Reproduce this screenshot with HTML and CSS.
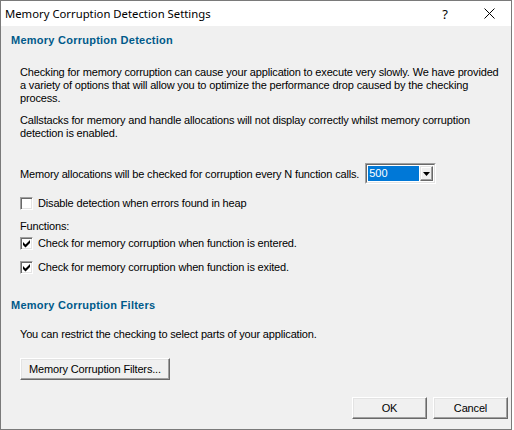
FILE: index.html
```html
<!DOCTYPE html>
<html>
<head>
<meta charset="utf-8">
<link rel="stylesheet" href="styles.css">
</head>
<body>
<div class="window">
  <div class="titlebar">
    <span class="title">Memory Corruption Detection Settings</span>
    <div class="controls">
      <span class="help">?</span>
      <svg class="close" width="11" height="11" viewBox="0 0 11 11"><path d="M0.5 0.5 L10.5 10.5 M10.5 0.5 L0.5 10.5" stroke="#000" stroke-width="1" fill="none"/></svg>
    </div>
  </div>
  <div class="content">
    <h2 class="heading h1">Memory Corruption Detection</h2>
    <p class="text p1">Checking for memory corruption can cause your application to execute very slowly. We have provided a variety of options that will allow you to optimize the performance drop caused by the checking process.</p>
    <p class="text p2">Callstacks for memory and handle allocations will not display correctly whilst memory corruption detection is enabled.</p>
    <div class="alloc-row">
      <span class="text alloc-label">Memory allocations will be checked for corruption every N function calls.</span>
      <div class="combo">
        <div class="combo-inner">
          <span class="combo-value">500</span>
          <span class="combo-btn"><svg width="7" height="4" viewBox="0 0 7 4"><path d="M0 0 H7 L3.5 4 Z" fill="#000"/></svg></span>
        </div>
      </div>
    </div>
    <div class="check-row cr1"><span class="cbox"></span><span class="text">Disable detection when errors found in heap</span></div>
    <div class="text functions">Functions:</div>
    <div class="check-row cr2"><span class="cbox"><svg width="9" height="9" viewBox="0 0 9 9"><path d="M1 3 L3.5 5.5 L8 1 V4 L3.5 8.5 L1 6 Z" fill="#000"/></svg></span><span class="text">Check for memory corruption when function is entered.</span></div>
    <div class="check-row cr3"><span class="cbox"><svg width="9" height="9" viewBox="0 0 9 9"><path d="M1 3 L3.5 5.5 L8 1 V4 L3.5 8.5 L1 6 Z" fill="#000"/></svg></span><span class="text">Check for memory corruption when function is exited.</span></div>
    <h2 class="heading h2">Memory Corruption Filters</h2>
    <p class="text p3">You can restrict the checking to select parts of your application.</p>
    <button class="btn filters-btn">Memory Corruption Filters...</button>
    <div class="footer">
      <button class="btn footer-btn">OK</button>
      <button class="btn footer-btn">Cancel</button>
    </div>
  </div>
</div>
</body>
</html>
```
FILE: styles.css
```css
html, body {
  margin: 0;
  padding: 0;
  background: #ffffff;
}
.window {
  width: 510px;
  height: 428px;
  border: 1px solid #7a7a7a;
  background: #f0f0f0;
  display: flex;
  flex-direction: column;
  overflow: hidden;
}
.titlebar {
  height: 25px;
  background: #ffffff;
  display: flex;
  align-items: center;
  justify-content: space-between;
  flex: none;
}
.title {
  font-family: "Noto Sans", sans-serif;
  font-size: 11.3px;
  color: #000;
  padding-left: 4px;
  line-height: 16px;
  margin-top: 1px;
}
.controls {
  display: flex;
  align-items: center;
  padding-right: 16px;
}
.help {
  font-family: "Noto Sans", sans-serif;
  font-size: 13px;
  line-height: 16px;
  margin-right: 36px;
  color: #000;
}
.close {
  display: block;
}
.content {
  padding: 0 0 0 19px;
  display: flex;
  flex-direction: column;
  align-items: flex-start;
}
.text {
  font-family: "Liberation Sans", Arial, sans-serif;
  font-size: 11px;
  line-height: 13px;
  letter-spacing: -0.16px;
  color: #000;
  margin: 0;
}
.heading {
  font-family: "Liberation Sans", Arial, sans-serif;
  font-weight: bold;
  font-size: 11px;
  line-height: 13px;
  letter-spacing: 0.25px;
  color: #005a8a;
  margin: 0 0 0 -9px;
}
.h1 { margin-top: 8px; }
.p1 { margin-top: 19px; width: 484px; }
.p2 { margin-top: 9px; width: 484px; }
.alloc-row {
  margin-top: 23px;
  display: flex;
  align-items: flex-start;
}
.alloc-label {
  margin-top: 5px;
  margin-right: 6px;
}
.combo {
  width: 69px;
  height: 19px;
  border: 1px solid;
  border-color: #a0a0a0 #ffffff #ffffff #a0a0a0;
}
.combo-inner {
  border: 1px solid;
  border-color: #696969 #e3e3e3 #e3e3e3 #696969;
  background: #fff;
  display: flex;
  padding: 1px;
  box-sizing: border-box;
  height: 19px;
}
.combo-value {
  flex: 1;
  background: #0078d7;
  color: #fff;
  font-family: "Liberation Sans", Arial, sans-serif;
  font-size: 11px;
  line-height: 15px;
  padding-left: 1px;
}
.combo-btn {
  width: 13px;
  margin-left: 1px;
  box-sizing: border-box;
  border: 1px solid;
  border-color: #e3e3e3 #696969 #696969 #e3e3e3;
  box-shadow: inset -1px -1px #a0a0a0, inset 1px 1px #fff;
  background: #f0f0f0;
  display: flex;
  align-items: center;
  justify-content: center;
}
.combo-btn svg { display: block; }
.check-row {
  display: flex;
  align-items: center;
}
.cbox {
  width: 13px;
  height: 13px;
  box-sizing: border-box;
  border: 1px solid;
  border-color: #a0a0a0 #fff #fff #a0a0a0;
  box-shadow: inset 1px 1px #696969, inset -1px -1px #e3e3e3;
  background: #fff;
  margin-right: 5px;
  display: flex;
  align-items: center;
  justify-content: center;
  flex: none;
}
.cbox svg { display: block; }
.cr1 { margin-top: 13px; }
.functions { margin-top: 10px; }
.cr2 { margin-top: 4px; }
.cr3 { margin-top: 11px; }
.h2 { margin-top: 25px; }
.p3 { margin-top: 16px; }
.btn {
  font-family: "Liberation Sans", Arial, sans-serif;
  font-size: 11px;
  letter-spacing: -0.16px;
  color: #000;
  background: #f0f0f0;
  height: 22px;
  box-sizing: border-box;
  border: 1px solid;
  border-color: #fff #696969 #696969 #fff;
  box-shadow: inset -1px -1px #a0a0a0, inset 1px 1px #e3e3e3;
  padding: 0;
  margin: 0;
}
.filters-btn {
  margin-top: 17px;
  width: 150px;
}
.footer {
  margin-top: 17px;
  align-self: flex-end;
  display: flex;
  gap: 6px;
  margin-right: 3px;
}
.footer-btn {
  width: 75px;
}
```
